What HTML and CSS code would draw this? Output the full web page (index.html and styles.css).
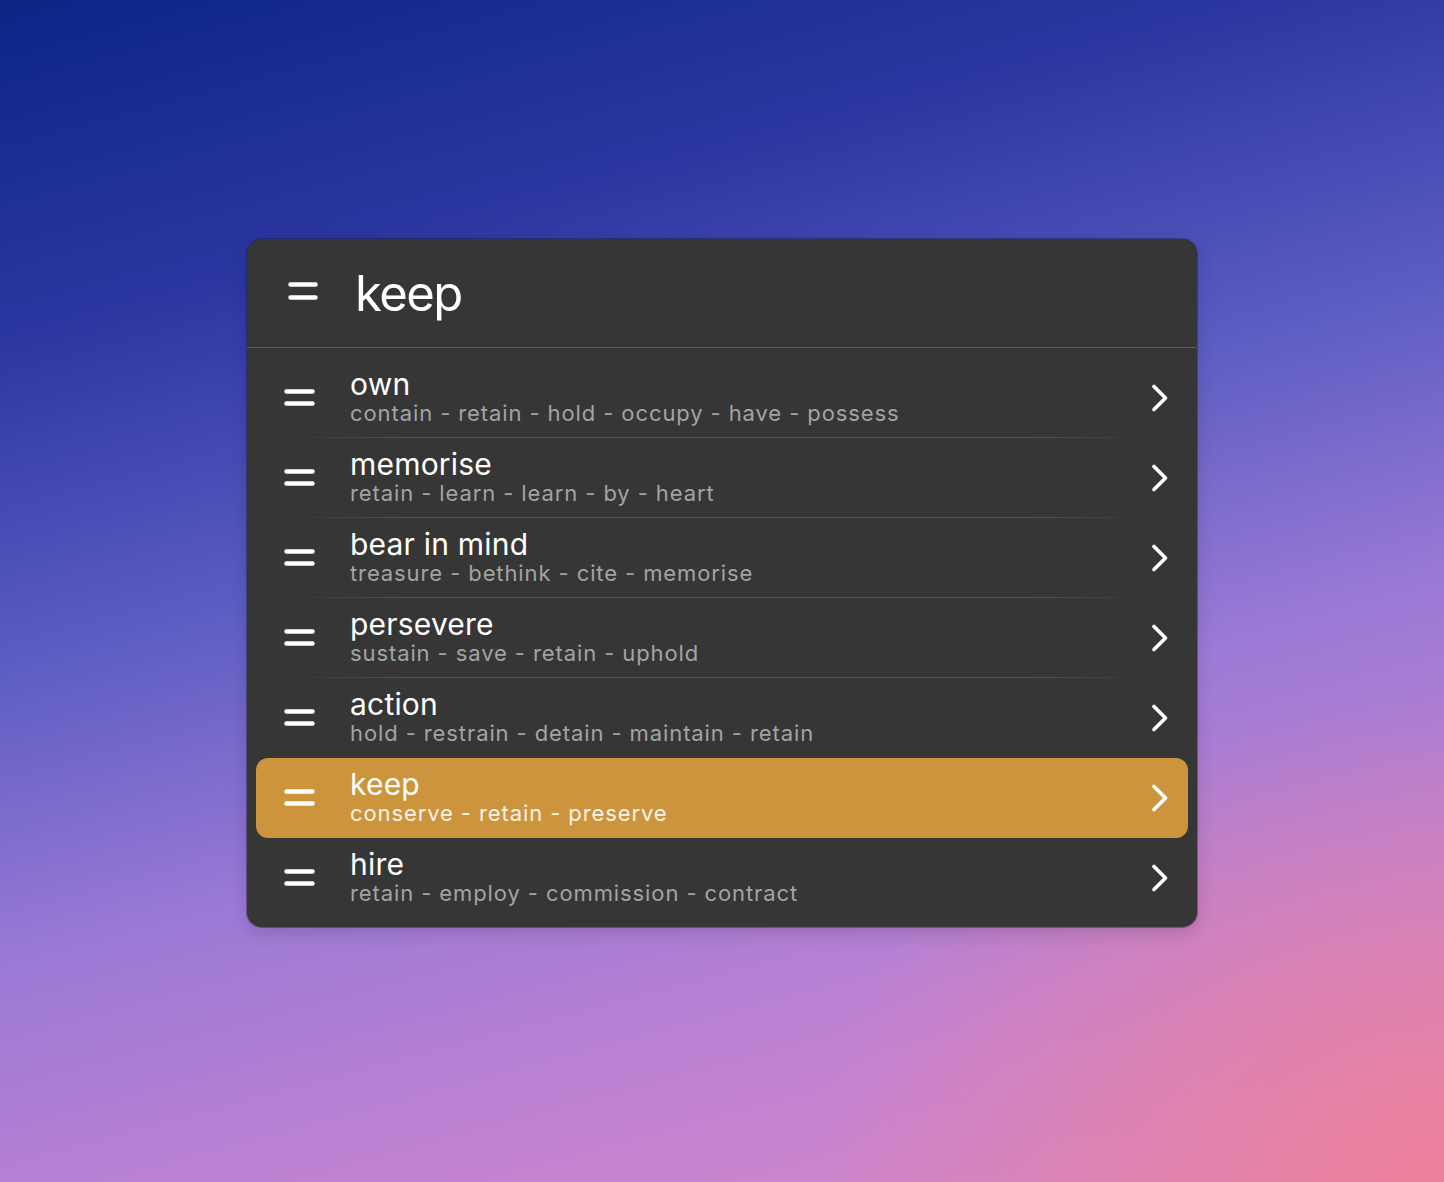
FILE: index.html
```html
<!DOCTYPE html>
<html lang="en">
<head>
<meta charset="utf-8">
<title>keep</title>
<link rel="stylesheet" href="styles.css">
</head>
<body>
<div class="stage">
  <div class="panel">
    <div class="header">
      <svg class="hicon" width="30" height="18" viewBox="0 0 30 18"><path d="M2.5 2.5H27.5M2.5 15.5H27.5" stroke="#fff" stroke-width="4.5" stroke-linecap="round"/></svg>
      <div class="query">keep</div>
    </div>
    <div class="list">
      <div class="row sep">
        <svg class="ricon" width="31" height="18" viewBox="0 0 31 18"><path d="M2.5 2.5H28.5M2.5 14.5H28.5" stroke="#fff" stroke-width="4.5" stroke-linecap="round"/></svg>
        <div class="text"><div class="title">own</div><div class="sub">contain - retain - hold - occupy - have - possess</div></div>
        <svg class="chev" width="18" height="28" viewBox="0 0 18 28"><path d="M3 2.5L14.5 14L3 25.5" fill="none" stroke="#fff" stroke-width="3.6" stroke-linecap="round" stroke-linejoin="round"/></svg>
      </div>
      <div class="row sep">
        <svg class="ricon" width="31" height="18" viewBox="0 0 31 18"><path d="M2.5 2.5H28.5M2.5 14.5H28.5" stroke="#fff" stroke-width="4.5" stroke-linecap="round"/></svg>
        <div class="text"><div class="title">memorise</div><div class="sub">retain - learn - learn - by - heart</div></div>
        <svg class="chev" width="18" height="28" viewBox="0 0 18 28"><path d="M3 2.5L14.5 14L3 25.5" fill="none" stroke="#fff" stroke-width="3.6" stroke-linecap="round" stroke-linejoin="round"/></svg>
      </div>
      <div class="row sep">
        <svg class="ricon" width="31" height="18" viewBox="0 0 31 18"><path d="M2.5 2.5H28.5M2.5 14.5H28.5" stroke="#fff" stroke-width="4.5" stroke-linecap="round"/></svg>
        <div class="text"><div class="title">bear in mind</div><div class="sub">treasure - bethink - cite - memorise</div></div>
        <svg class="chev" width="18" height="28" viewBox="0 0 18 28"><path d="M3 2.5L14.5 14L3 25.5" fill="none" stroke="#fff" stroke-width="3.6" stroke-linecap="round" stroke-linejoin="round"/></svg>
      </div>
      <div class="row sep">
        <svg class="ricon" width="31" height="18" viewBox="0 0 31 18"><path d="M2.5 2.5H28.5M2.5 14.5H28.5" stroke="#fff" stroke-width="4.5" stroke-linecap="round"/></svg>
        <div class="text"><div class="title">persevere</div><div class="sub">sustain - save - retain - uphold</div></div>
        <svg class="chev" width="18" height="28" viewBox="0 0 18 28"><path d="M3 2.5L14.5 14L3 25.5" fill="none" stroke="#fff" stroke-width="3.6" stroke-linecap="round" stroke-linejoin="round"/></svg>
      </div>
      <div class="row">
        <svg class="ricon" width="31" height="18" viewBox="0 0 31 18"><path d="M2.5 2.5H28.5M2.5 14.5H28.5" stroke="#fff" stroke-width="4.5" stroke-linecap="round"/></svg>
        <div class="text"><div class="title">action</div><div class="sub">hold - restrain - detain - maintain - retain</div></div>
        <svg class="chev" width="18" height="28" viewBox="0 0 18 28"><path d="M3 2.5L14.5 14L3 25.5" fill="none" stroke="#fff" stroke-width="3.6" stroke-linecap="round" stroke-linejoin="round"/></svg>
      </div>
      <div class="row active">
        <svg class="ricon" width="31" height="18" viewBox="0 0 31 18"><path d="M2.5 2.5H28.5M2.5 14.5H28.5" stroke="#fff" stroke-width="4.5" stroke-linecap="round"/></svg>
        <div class="text"><div class="title">keep</div><div class="sub">conserve - retain - preserve</div></div>
        <svg class="chev" width="18" height="28" viewBox="0 0 18 28"><path d="M3 2.5L14.5 14L3 25.5" fill="none" stroke="#fff" stroke-width="3.6" stroke-linecap="round" stroke-linejoin="round"/></svg>
      </div>
      <div class="row">
        <svg class="ricon" width="31" height="18" viewBox="0 0 31 18"><path d="M2.5 2.5H28.5M2.5 14.5H28.5" stroke="#fff" stroke-width="4.5" stroke-linecap="round"/></svg>
        <div class="text"><div class="title">hire</div><div class="sub">retain - employ - commission - contract</div></div>
        <svg class="chev" width="18" height="28" viewBox="0 0 18 28"><path d="M3 2.5L14.5 14L3 25.5" fill="none" stroke="#fff" stroke-width="3.6" stroke-linecap="round" stroke-linejoin="round"/></svg>
      </div>
    </div>
  </div>
</div>
</body>
</html>
```

FILE: styles.css
```css
html, body {
  margin: 0;
  padding: 0;
}
body {
  width: 1444px;
  height: 1182px;
  overflow: hidden;
  font-family: Inter, "Noto Sans", "Liberation Sans", sans-serif;
  background:
    radial-gradient(ellipse 900px 700px at 100% 100%, rgba(240,128,150,0.9) 0%, rgba(240,128,150,0) 70%),
    linear-gradient(165deg, #0b2585 0%, #2c37a2 22%, #5a5cc2 42%, #9c7ad6 62%, #c282d2 82%, #d888c4 100%);
}
.stage {
  display: flex;
  justify-content: center;
  padding-top: 239px;
}
.panel {
  width: 950px;
  background: #363636;
  border-radius: 15px;
  box-shadow: 0 0 0 1px rgba(20,20,30,0.35), 0 6px 18px rgba(0,0,0,0.15);
  overflow: hidden;
}
.header {
  height: 108px;
  display: flex;
  align-items: center;
  padding-left: 41px;
  border-bottom: 1px solid #5c5c5c;
}
.hicon {
  display: block;
  margin-top: -4px;
}
.query {
  margin-left: 37px;
  color: #fff;
  font-size: 49px;
  letter-spacing: -1.6px;
  line-height: 1;
  margin-top: 0;
}
.list {
  padding: 10px 9px 9px;
}
.row {
  position: relative;
  height: 80px;
  display: flex;
  align-items: center;
  padding-left: 28px;
  padding-right: 19px;
  border-radius: 12px;
}
.row.sep::after {
  content: "";
  position: absolute;
  left: 40px;
  right: 50px;
  bottom: 0;
  height: 1px;
  background: linear-gradient(90deg, rgba(80,80,80,0) 0%, #515151 12%, #515151 88%, rgba(80,80,80,0) 100%);
}
.row.active {
  background: #cc943c;
}
.ricon {
  display: block;
  flex: none;
}
.text {
  flex: 1;
  margin-left: 35px;
  margin-top: -3px;
}
.title {
  color: #fff;
  font-size: 30px;
  line-height: 32px;
  letter-spacing: 0.2px;
}
.sub {
  color: #a3a3a3;
  font-size: 22px;
  line-height: 26px;
  letter-spacing: 0.9px;
}
.active .sub {
  color: #fbf3e6;
}
.chev {
  display: block;
  flex: none;
}
```
